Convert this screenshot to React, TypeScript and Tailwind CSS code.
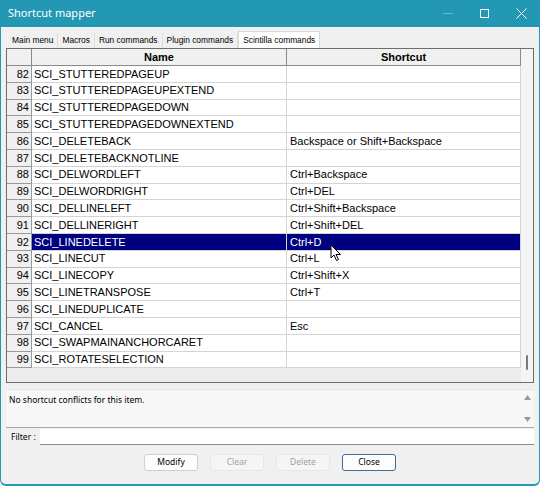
import React from "react"

const rows: [number, string, string][] = [
  [82, "SCI_STUTTEREDPAGEUP", ""],
  [83, "SCI_STUTTEREDPAGEUPEXTEND", ""],
  [84, "SCI_STUTTEREDPAGEDOWN", ""],
  [85, "SCI_STUTTEREDPAGEDOWNEXTEND", ""],
  [86, "SCI_DELETEBACK", "Backspace or Shift+Backspace"],
  [87, "SCI_DELETEBACKNOTLINE", ""],
  [88, "SCI_DELWORDLEFT", "Ctrl+Backspace"],
  [89, "SCI_DELWORDRIGHT", "Ctrl+DEL"],
  [90, "SCI_DELLINELEFT", "Ctrl+Shift+Backspace"],
  [91, "SCI_DELLINERIGHT", "Ctrl+Shift+DEL"],
  [92, "SCI_LINEDELETE", "Ctrl+D"],
  [93, "SCI_LINECUT", "Ctrl+L"],
  [94, "SCI_LINECOPY", "Ctrl+Shift+X"],
  [95, "SCI_LINETRANSPOSE", "Ctrl+T"],
  [96, "SCI_LINEDUPLICATE", ""],
  [97, "SCI_CANCEL", "Esc"],
  [98, "SCI_SWAPMAINANCHORCARET", ""],
  [99, "SCI_ROTATESELECTION", ""],
]

const tabs = ["Main menu", "Macros", "Run commands", "Plugin commands", "Scintilla commands"]

const ui = "font-['Noto_Sans','Open_Sans',sans-serif]"
const grid = "font-['Liberation_Sans',Arial,sans-serif]"

function Cursor() {
  return (
    <svg className="absolute left-[329px] top-[244px]" width="12" height="18" viewBox="0 0 12 18">
      <path d="M1 1 L1 14 L4 11 L6.5 16.5 L8.5 15.5 L6 10.5 L10.5 10.5 Z" fill="#fff" stroke="#000" strokeWidth="1" strokeLinejoin="round" />
    </svg>
  )
}

export default function App() {
  return (
    <div className="relative w-[540px] h-[486px] bg-[#f0f0f0] flex flex-col overflow-hidden rounded-b-[6px] border-x border-b-2 border-[#2398b4]">
      {/* Title bar */}
      <div className="h-[27px] shrink-0 bg-[#2398b4] flex items-center text-white -mx-px">
        <span className={`${ui} text-[11px] pl-[8px]`}>Shortcut mapper</span>
        <div className="ml-auto flex items-center h-full">
          <div className="w-[37px] flex justify-center">
            <div className="w-[10px] h-px bg-white/30" />
          </div>
          <div className="w-[37px] flex justify-center">
            <div className="w-[9px] h-[9px] border border-white" />
          </div>
          <div className="w-[37px] flex justify-center">
            <svg width="11" height="11" viewBox="0 0 11 11">
              <path d="M0.5 0.5 L10.5 10.5 M10.5 0.5 L0.5 10.5" stroke="#fff" strokeWidth="1" />
            </svg>
          </div>
        </div>
      </div>

      {/* Tabs */}
      <div className="font-['Liberation_Sans',Arial,sans-serif] text-[8.4px] text-black flex items-end h-[21px] shrink-0 pl-[7px]">
        {tabs.map((t, i) => {
          const sel = i === tabs.length - 1
          return (
            <div
              key={t}
              className={
                sel
                  ? "h-[17px] px-[4px] bg-white border border-b-0 border-[#d9d9d9] flex items-center"
                  : "h-[15px] px-[4px] border-r border-[#dcdcdc] flex items-center"
              }
            >
              {t}
            </div>
          )
        })}
      </div>

      {/* Grid */}
      <div className={`${grid} mx-[5px] h-[335px] shrink-0 border border-[#6d6d6d] bg-[#ececec] flex text-[11px] text-black`}>
        <div className="flex-1 flex flex-col">
          <div className="flex h-[17px] shrink-0 bg-[#f0f0f0] border-b border-[#8a8a8a]">
            <div className="w-[25px] border-r border-[#8a8a8a]" />
            <div className="w-[255px] border-r border-[#8a8a8a] flex items-center justify-center font-bold">Name</div>
            <div className="w-[234px] border-r border-[#8a8a8a] flex items-center justify-center font-bold">Shortcut</div>
          </div>
          {rows.map(([n, name, key]) => {
            const sel = n === 92
            return (
              <div key={n} className="flex h-[16.8px] shrink-0">
                <div className="w-[25px] bg-[#f0f0f0] border-r border-b border-[#9a9a9a] flex items-center justify-end pr-[2px]">
                  {n}
                </div>
                <div
                  className={`w-[255px] border-r border-b border-[#d4d4d4] flex items-center pl-[2px] ${
                    sel ? "bg-[#000080] text-white" : "bg-white"
                  }`}
                >
                  {name}
                </div>
                <div
                  className={`w-[234px] border-r border-b border-[#d4d4d4] flex items-center pl-[3px] ${
                    sel ? "bg-[#000080] text-white" : "bg-white"
                  }`}
                >
                  {key}
                </div>
              </div>
            )
          })}
        </div>
        {/* Vertical scrollbar */}
        <div className="w-[13px] bg-[#f4f4f4] flex flex-col justify-end items-center pb-[12px]">
          <div className="w-[2px] h-[15px] bg-[#7a7a7a] rounded-full" />
        </div>
      </div>

      {/* Conflict info */}
      <div className={`${ui} mx-[5px] mt-[6px] h-[39px] shrink-0 bg-[#f7f7f7] border-t border-[#e4e4e4] border-b border-b-[#a8a8a8] flex`}>
        <div className="flex-1 text-[8.5px] pl-[3px] pt-[4px] text-black">No shortcut conflicts for this item.</div>
        <div className="w-[13px] flex flex-col items-center justify-between py-[5px] text-[#9a9a9a]">
          <svg width="7" height="5" viewBox="0 0 7 5"><path d="M0 5 L3.5 0 L7 5 Z" fill="currentColor" /></svg>
          <svg width="7" height="5" viewBox="0 0 7 5"><path d="M0 0 L3.5 5 L7 0 Z" fill="currentColor" /></svg>
        </div>
      </div>

      {/* Filter */}
      <div className={`${ui} flex items-center h-[18px] shrink-0 text-[8.5px] pl-[10px] pr-[5px]`}>
        <span className="w-[29px]">Filter :</span>
        <div className="flex-1 h-[16px] bg-white border-b border-[#8c8c8c]" />
      </div>

      {/* Buttons */}
      <div className={`${ui} flex justify-center gap-[12px] mt-[8px] text-[8.5px]`}>
        <button className="w-[54px] h-[17px] bg-[#fdfdfd] border border-[#d0d0d0] rounded-[3px] text-black">Modify</button>
        <button className="w-[54px] h-[17px] bg-[#f5f5f5] border border-[#e6e6e6] rounded-[3px] text-[#a0a0a0]">Clear</button>
        <button className="w-[54px] h-[17px] bg-[#f5f5f5] border border-[#e6e6e6] rounded-[3px] text-[#a0a0a0]">Delete</button>
        <button className="w-[54px] h-[17px] bg-[#fdfdfd] border border-[#3f6d9c] rounded-[3px] text-black">Close</button>
      </div>

      <Cursor />
    </div>
  )
}
